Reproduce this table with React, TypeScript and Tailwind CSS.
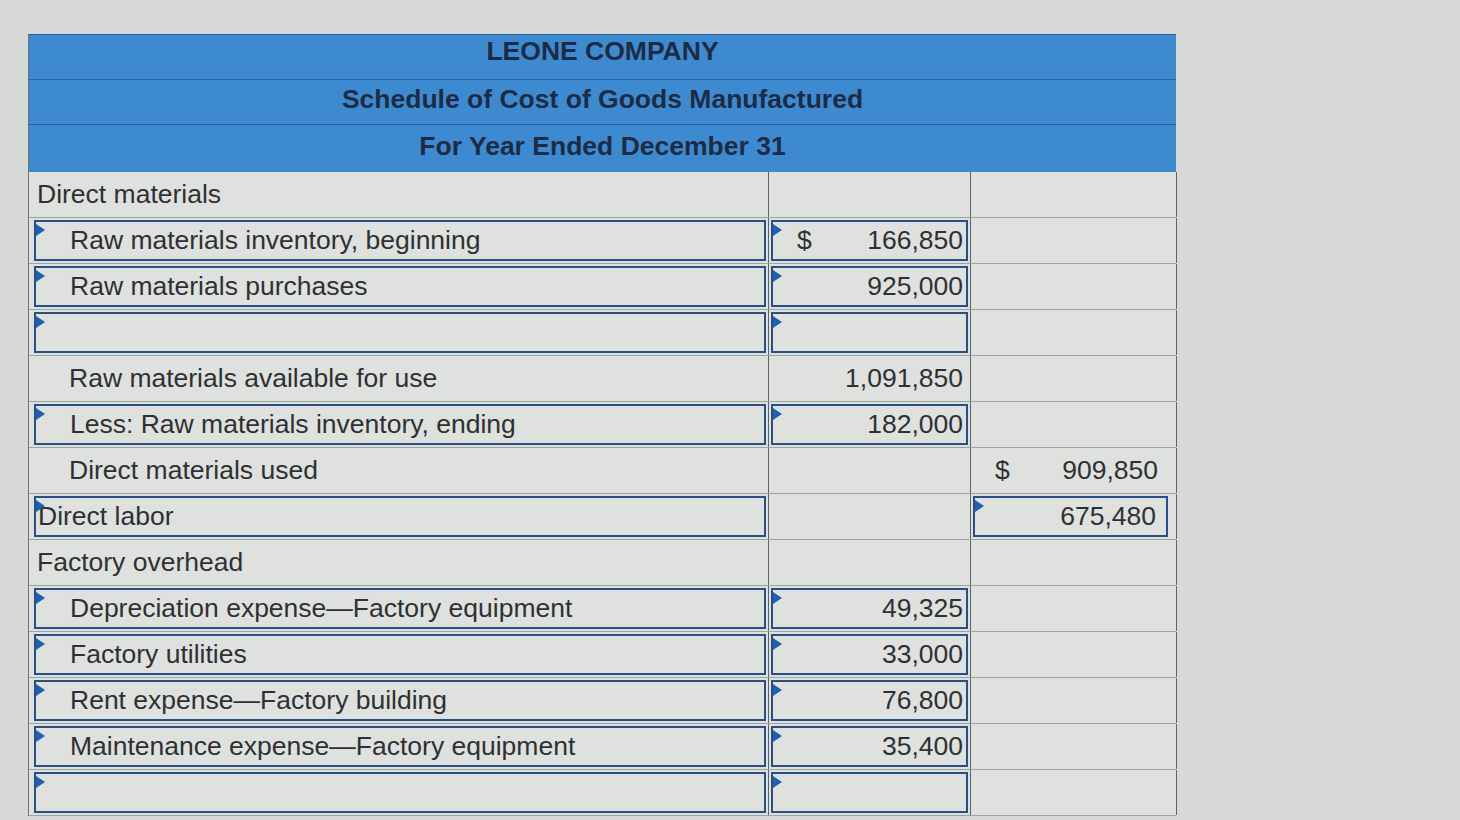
import React from 'react';

type Cell = { input?: boolean; dollar?: boolean; value?: string };
type Row = { label: string; indent: 0 | 1; labelInput?: boolean; c2?: Cell; c3?: Cell };

const rows: Row[] = [
  { label: 'Direct materials', indent: 0 },
  { label: 'Raw materials inventory, beginning', indent: 1, labelInput: true, c2: { input: true, dollar: true, value: '166,850' } },
  { label: 'Raw materials purchases', indent: 1, labelInput: true, c2: { input: true, value: '925,000' } },
  { label: '', indent: 1, labelInput: true, c2: { input: true } },
  { label: 'Raw materials available for use', indent: 1, c2: { value: '1,091,850' } },
  { label: 'Less: Raw materials inventory, ending', indent: 1, labelInput: true, c2: { input: true, value: '182,000' } },
  { label: 'Direct materials used', indent: 1, c3: { dollar: true, value: '909,850' } },
  { label: 'Direct labor', indent: 0, labelInput: true, c3: { input: true, value: '675,480' } },
  { label: 'Factory overhead', indent: 0 },
  { label: 'Depreciation expense—Factory equipment', indent: 1, labelInput: true, c2: { input: true, value: '49,325' } },
  { label: 'Factory utilities', indent: 1, labelInput: true, c2: { input: true, value: '33,000' } },
  { label: 'Rent expense—Factory building', indent: 1, labelInput: true, c2: { input: true, value: '76,800' } },
  { label: 'Maintenance expense—Factory equipment', indent: 1, labelInput: true, c2: { input: true, value: '35,400' } },
  { label: '', indent: 1, labelInput: true, c2: { input: true } },
];

const Flag = () => (
  <span className="absolute left-0 top-[2px] h-0 w-0 border-y-[6px] border-y-transparent border-l-[9px] border-l-[#1f5fb0]" />
);

const LabelCell = ({ row }: { row: Row }) => {
  const pad = row.indent === 0 ? 'pl-[8px]' : 'pl-[40px]';
  if (row.labelInput) {
    return (
      <div className="h-full p-[2px] pl-[5px]">
        <div className="relative flex h-full items-center border-2 border-[#2a4f86]">
          <Flag />
          <span className={row.indent === 0 ? 'pl-[2px]' : 'pl-[34px]'}>{row.label}</span>
        </div>
      </div>
    );
  }
  return <div className={`flex h-full items-center ${pad}`}>{row.label}</div>;
};

const AmountCell = ({ cell, last }: { cell?: Cell; last?: boolean }) => {
  if (!cell) return <div className="h-full" />;
  const inner = (
    <>
      {cell.dollar && <span className="pl-[24px]">$</span>}
      <span className={`ml-auto ${last ? 'pr-[10px]' : 'pr-[3px]'}`}>{cell.value}</span>
    </>
  );
  if (cell.input) {
    return (
      <div className={`h-full p-[2px] ${last ? 'pr-[8px]' : ''}`}>
        <div className="relative flex h-full items-center border-2 border-[#2a4f86]">
          <Flag />
          {inner}
        </div>
      </div>
    );
  }
  return <div className={`flex h-full items-center ${last ? 'pr-[8px]' : 'pr-[4px]'}`}>{inner}</div>;
};

export default function App() {
  return (
    <div className="min-h-screen w-full bg-[#d7d9d6] pt-[34px] pl-[28px] text-[#2e3133]" style={{ fontFamily: '"Liberation Sans", Arial, sans-serif' }}>
      <div className="w-[1148px] border-l border-[#6e7472] bg-[#dfe1de]">
        <div className="bg-[#3e8ad0] text-center font-bold text-[26.5px] text-[#1c2c46]">
          <div className="flex h-[46px] items-center justify-center border-y border-[#2c639e] pb-[10px]">LEONE COMPANY</div>
          <div className="flex h-[45px] items-center justify-center border-b border-[#2c639e] pb-[4px]">Schedule of Cost of Goods Manufactured</div>
          <div className="flex h-[47px] items-center justify-center pb-[4px]">For Year Ended December 31</div>
        </div>
        <div className="text-[26.5px] leading-none">
          {rows.map((row, i) => (
            <div key={i} className="grid h-[46px] grid-cols-[740px_202px_206px] border-b border-[#9ea3a1]">
              <div className="border-r border-[#5d6462]">
                <LabelCell row={row} />
              </div>
              <div className="border-r border-[#5d6462]">
                <AmountCell cell={row.c2} />
              </div>
              <div className="border-r border-[#5d6462]">
                <AmountCell cell={row.c3} last />
              </div>
            </div>
          ))}
        </div>
      </div>
    </div>
  );
}
